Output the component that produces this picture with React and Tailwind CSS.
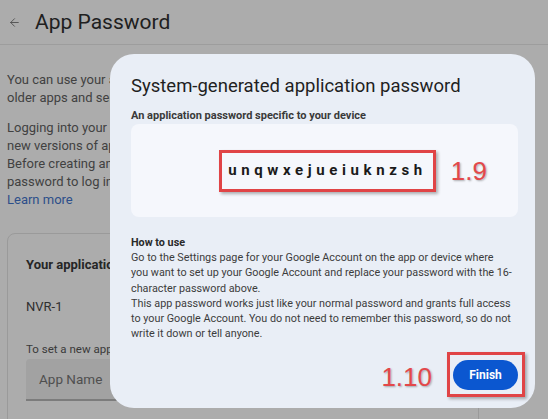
import React from 'react';
import { ArrowLeft } from 'lucide-react';

const FONT = "font-['Roboto','Liberation_Sans',sans-serif]";

function RedMark({ children, className = '' }) {
    // annotation number drawn on the screenshot
    return (
        <span className={`font-['Liberation_Sans',sans-serif] text-[26px] leading-none text-[#e3484a] [text-shadow:1px_1px_2px_rgba(0,0,0,0.3)] ${className}`}>
            {children}
        </span>
    );
}

function PasswordDialog() {
    return (
        <div className="absolute left-[110px] top-[54px] w-[425px] h-[354px] rounded-[24px] bg-[#e9eef6] pl-[21px] pr-[17px] pt-[20px] flex flex-col">
            <h2 className="text-[18.5px] leading-[24px] text-[#1f1f1f]">System-generated application password</h2>
            <p className="mt-[11px] text-[11px] leading-[14px] font-bold text-[#3a3a3a]">An application password specific to your device</p>

            {/* Password box */}
            <div className="mt-[1px] h-[93px] rounded-[8px] bg-[#f5f7fc] flex items-center justify-center">
                <div className="relative ml-[6px]">
                    <div className="border-[3px] border-[#e04446] pl-[6px] pr-[6px] h-[42px] flex items-center shadow-[2px_2px_3px_rgba(0,0,0,0.3)]">
                        <span className="text-[15px] font-bold tracking-[4.6px] text-[#1a1a1a]">unqwxejueiuknzsh</span>
                    </div>
                    <RedMark className="absolute left-full top-1/2 -translate-y-1/2 ml-[15px]">1.9</RedMark>
                </div>
            </div>

            {/* How to use */}
            <div className="mt-[18px] whitespace-nowrap text-[10.8px] leading-[15.2px] text-[#3c3c3c]">
                <p className="font-bold text-[#2a2a2a]">How to use</p>
                <p>
                    Go to the Settings page for your Google Account on the app or device where<br />
                    you want to set up your Google Account and replace your password with the 16-<br />
                    character password above.
                </p>
                <p>
                    This app password works just like your normal password and grants full access<br />
                    to your Google Account. You do not need to remember this password, so do not<br />
                    write it down or tell anyone.
                </p>
            </div>

            {/* Footer */}
            <div className="mt-auto mb-[18px] flex items-center justify-end">
                <RedMark className="mr-[21px] mt-[4px]">1.10</RedMark>
                <div className="relative">
                    <button className="w-[65px] h-[30px] rounded-full bg-[#0b57d0] text-white text-[12px] font-bold">
                        Finish
                    </button>
                    <div className="absolute -left-[6px] -right-[7px] -top-[8px] -bottom-[7px] border-[3px] border-[#e04446] shadow-[2px_2px_3px_rgba(0,0,0,0.3)]" />
                </div>
            </div>
        </div>
    );
}

export default function App() {
    return (
        <div className={`relative w-full h-[419px] overflow-hidden bg-[#acacac] ${FONT}`}>
            {/* Header */}
            <div className="h-[45px] border-b border-[#9d9d9d] flex items-center pl-[8px]">
                <ArrowLeft size={13} strokeWidth={1.6} className="text-[#4a4a4a]" />
                <h1 className="ml-[14px] text-[21px] leading-none text-[#202020]">App Password</h1>
            </div>

            {/* Page content behind the dialog */}
            <div className="px-[7px] text-[13px] leading-[18px] text-[#414141]">
                <p className="mt-[26px]">
                    You can use your application password to sign in to your Google Account from<br />
                    older apps and services that do not support modern security standards.
                </p>
                <p className="mt-[12px]">
                    Logging into your account with an application password is less secure than using<br />
                    new versions of apps and services that use modern security standards.<br />
                    Before creating an application password, check whether your app needs this<br />
                    password to log in to your account.<br />
                    <a className="text-[#2c4f8a]">Learn more</a>
                </p>

                <div className="mt-[24px] w-[472px] h-[220px] rounded-[8px] border border-[#9a9a9a] pl-[18px] pt-[22px]">
                    <p className="font-bold text-[#262626]">Your application passwords</p>
                    <p className="mt-[24px] text-[#2f2f2f]">NVR-1</p>
                    <p className="mt-[26px] text-[11.5px] leading-[14px] text-[#3a3a3a]">To set a new app password, enter a name below</p>
                    <div className="mt-[3px] mr-[18px] h-[42px] rounded-t-[4px] bg-[#a2a2a2] border-b-2 border-[#7c7c7c] flex items-center pl-[13px]">
                        <span className="text-[13.5px] text-[#4f4f4f]">App Name</span>
                    </div>
                </div>
            </div>

            <PasswordDialog />
        </div>
    );
}
